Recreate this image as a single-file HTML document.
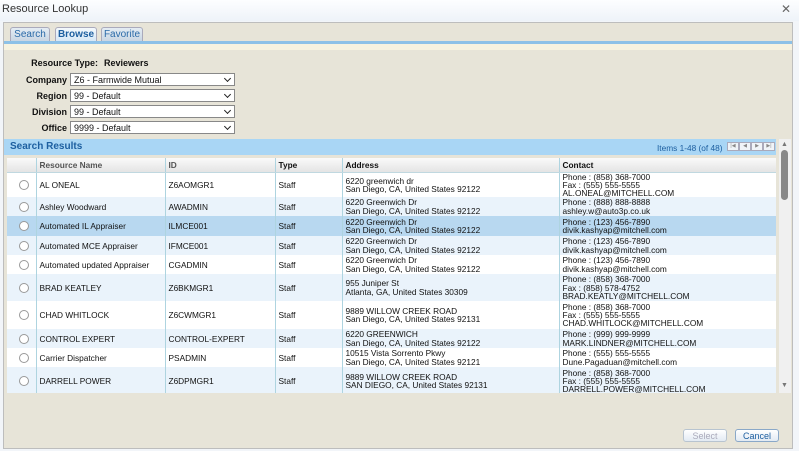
<!DOCTYPE html>
<html><head><style>
*{margin:0;padding:0;box-sizing:border-box}
body{width:799px;height:451px;overflow:hidden;background:#f2f5f9;font-family:"Liberation Sans",Arial,sans-serif;font-size:9px;color:#111;position:relative}
.abs{position:absolute}
#title{left:0;top:0;width:799px;height:21px;background:linear-gradient(#fdfeff,#eef3f9);font-size:11px;color:#333;padding:3px 0 0 2px}
#x{right:8px;top:2px;font-size:12px;color:#666}
#panel{left:3px;top:22px;width:790px;height:427px;background:#e7e4d8;border:1px solid #bdbdbd}
.tab{top:27px;height:14px;border:1px solid #aab;border-bottom:none;border-radius:3px 3px 0 0;background:linear-gradient(#e4ecf4,#c9d6e3);color:#2a6aa8;font-size:10px;text-align:center;padding-top:1px}
#tline{left:4px;top:41px;width:788px;height:3px;background:#8dc1e7}
#cream{left:4px;top:44px;width:788px;height:6px;background:#f6f2e0}
.lbl{font-weight:bold;font-size:9px;text-align:right;width:70px;left:0}
.sel{left:70px;width:165px;height:13px;border:1px solid #888;background:#fff;font-size:9px;padding:1px 0 0 3px}
.sel:after{content:"";position:absolute;right:4px;top:2px;width:4px;height:4px;border-right:1.5px solid #222;border-bottom:1.5px solid #222;transform:rotate(45deg)}
#srh{left:4px;top:139px;width:772px;height:16px;background:#a9d6f5;color:#1d5fa0;font-weight:bold;font-size:10px;padding:2px 0 0 6px}
#items{left:657px;top:143px;color:#1d5fa0;font-size:8.3px}
.pb{top:142px;width:12px;height:9px;border:1px solid #aab;background:#f0f4f8;font-size:5px;color:#888;text-align:center;line-height:7px}
#tbl{left:7px;top:158px;width:769px;height:235px;background:#fff;overflow:hidden}
table{border-collapse:collapse;table-layout:fixed;width:769px}
td,th{border-right:1px solid #aed4e0;padding:0 3px;vertical-align:middle;font-size:8.3px;line-height:8.2px;overflow:hidden;white-space:nowrap}
th{height:14px;background:linear-gradient(#fafafa,#e4e4e4);text-align:left;font-weight:bold;border-bottom:1px solid #c0d8e0}
tr.a td{background:#fff}tr.b td{background:#eaf3fb}tr.s td{background:#b8d8f0}
.r{display:inline-block;width:10px;height:10px;border:1px solid #999;border-radius:50%;background:#fff;margin-left:9px;vertical-align:middle}
#sb{left:779px;top:139px;width:12px;height:254px;background:#f0f0f0}
#thumb{left:781px;top:150px;width:7px;height:50px;background:#888;border-radius:4px}
.btn{top:429px;height:13px;border:1px solid #8aa8c8;border-radius:3px;background:linear-gradient(#fff,#e2eaf3);font-size:9px;text-align:center;color:#1d5fa0;padding-top:1px}
</style></head><body>
<div id="title" class="abs">Resource Lookup</div>
<div id="x" class="abs">✕</div>
<div id="panel" class="abs"></div>
<div class="tab abs" style="left:10px;width:40px">Search</div>
<div class="tab abs" style="left:55px;width:42px;background:linear-gradient(#f4f9fd,#d6e8f6);font-weight:bold;color:#1d5fa0">Browse</div>
<div class="tab abs" style="left:101px;width:42px">Favorite</div>
<div id="tline" class="abs"></div>
<div id="cream" class="abs"></div>
<div class="abs lbl" style="top:58px;width:98px">Resource Type:</div>
<div class="abs" style="left:104px;top:58px;font-weight:bold">Reviewers</div>
<div class="abs lbl" style="top:75px;width:67px">Company</div><div class="abs sel" style="top:73px">Z6 - Farmwide Mutual</div>
<div class="abs lbl" style="top:91px;width:67px">Region</div><div class="abs sel" style="top:89px">99 - Default</div>
<div class="abs lbl" style="top:107px;width:67px">Division</div><div class="abs sel" style="top:105px">99 - Default</div>
<div class="abs lbl" style="top:123px;width:67px">Office</div><div class="abs sel" style="top:121px">9999 - Default</div>
<div id="srh" class="abs">Search Results</div>
<div id="items" class="abs">Items 1-48 (of 48)</div>
<div class="pb abs" style="left:727px">|◀</div><div class="pb abs" style="left:739px">◀</div><div class="pb abs" style="left:751px">▶</div><div class="pb abs" style="left:763px">▶|</div>
<div id="tbl" class="abs"><table>
<colgroup><col style="width:29px"><col style="width:129px"><col style="width:110px"><col style="width:67px"><col style="width:217px"><col style="width:217px"></colgroup>
<tr><th></th><th style="color:#555">Resource Name</th><th style="color:#555">ID</th><th>Type</th><th>Address</th><th>Contact</th></tr>
<tr class="a" style="height:25px"><td><span class="r"></span></td><td>AL ONEAL</td><td>Z6AOMGR1</td><td>Staff</td><td>6220 greenwich dr<br>San Diego, CA, United States 92122</td><td>Phone : (858) 368-7000<br>Fax : (555) 555-5555<br>AL.ONEAL@MITCHELL.COM</td></tr>
<tr class="b" style="height:19px"><td><span class="r"></span></td><td>Ashley Woodward</td><td>AWADMIN</td><td>Staff</td><td>6220 Greenwich Dr<br>San Diego, CA, United States 92122</td><td>Phone : (888) 888-8888<br>ashley.w@auto3p.co.uk</td></tr>
<tr class="s" style="height:20px"><td><span class="r"></span></td><td>Automated IL Appraiser</td><td>ILMCE001</td><td>Staff</td><td>6220 Greenwich Dr<br>San Diego, CA, United States 92122</td><td>Phone : (123) 456-7890<br>divik.kashyap@mitchell.com</td></tr>
<tr class="b" style="height:19px"><td><span class="r"></span></td><td>Automated MCE Appraiser</td><td>IFMCE001</td><td>Staff</td><td>6220 Greenwich Dr<br>San Diego, CA, United States 92122</td><td>Phone : (123) 456-7890<br>divik.kashyap@mitchell.com</td></tr>
<tr class="a" style="height:19px"><td><span class="r"></span></td><td>Automated updated Appraiser</td><td>CGADMIN</td><td>Staff</td><td>6220 Greenwich Dr<br>San Diego, CA, United States 92122</td><td>Phone : (123) 456-7890<br>divik.kashyap@mitchell.com</td></tr>
<tr class="b" style="height:27px"><td><span class="r"></span></td><td>BRAD KEATLEY</td><td>Z6BKMGR1</td><td>Staff</td><td>955 Juniper St<br>Atlanta, GA, United States 30309</td><td>Phone : (858) 368-7000<br>Fax : (858) 578-4752<br>BRAD.KEATLY@MITCHELL.COM</td></tr>
<tr class="a" style="height:28px"><td><span class="r"></span></td><td>CHAD WHITLOCK</td><td>Z6CWMGR1</td><td>Staff</td><td>9889 WILLOW CREEK ROAD<br>San Diego, CA, United States 92131</td><td>Phone : (858) 368-7000<br>Fax : (555) 555-5555<br>CHAD.WHITLOCK@MITCHELL.COM</td></tr>
<tr class="b" style="height:19px"><td><span class="r"></span></td><td>CONTROL EXPERT</td><td>CONTROL-EXPERT</td><td>Staff</td><td>6220 GREENWICH<br>San Diego, CA, United States 92122</td><td>Phone : (999) 999-9999<br>MARK.LINDNER@MITCHELL.COM</td></tr>
<tr class="a" style="height:19px"><td><span class="r"></span></td><td>Carrier Dispatcher</td><td>PSADMIN</td><td>Staff</td><td>10515 Vista Sorrento Pkwy<br>San Diego, CA, United States 92121</td><td>Phone : (555) 555-5555<br>Dune.Pagaduan@mitchell.com</td></tr>
<tr class="b" style="height:28px"><td><span class="r"></span></td><td>DARRELL POWER</td><td>Z6DPMGR1</td><td>Staff</td><td>9889 WILLOW CREEK ROAD<br>SAN DIEGO, CA, United States 92131</td><td>Phone : (858) 368-7000<br>Fax : (555) 555-5555<br>DARRELL.POWER@MITCHELL.COM</td></tr>
</table></div>
<div id="sb" class="abs"></div>
<div class="abs" style="left:781px;top:141px;font-size:7px;color:#777">▲</div>
<div id="thumb" class="abs"></div>
<div class="abs" style="left:781px;top:382px;font-size:7px;color:#777">▼</div>
<div class="btn abs" style="left:683px;width:44px;color:#aab;border-color:#b8c4d0">Select</div>
<div class="btn abs" style="left:735px;width:44px">Cancel</div>
</body></html>
